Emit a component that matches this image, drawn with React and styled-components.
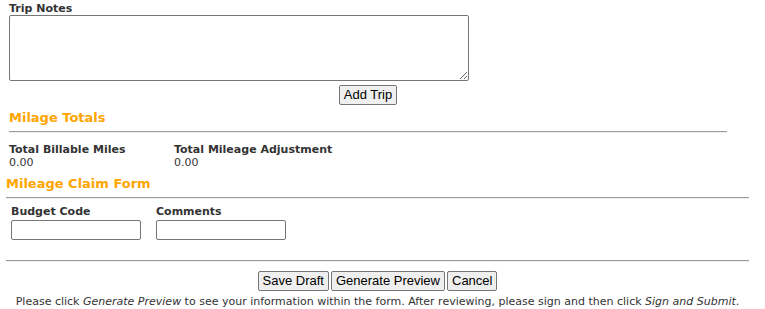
import React from "react";
import styled, { createGlobalStyle } from "styled-components";

const Global = createGlobalStyle`
  html, body { margin: 0; padding: 0; background: #fff; }
  body { font-family: "DejaVu Sans", Verdana, sans-serif; font-size: 11px; color: #333; }
`;

const Page = styled.div`
  display: flex;
  flex-direction: column;
  padding-top: 3px;
`;

const Section = styled.div`
  display: flex;
  flex-direction: column;
  margin-left: ${(p) => p.$left}px;
  width: ${(p) => p.$width}px;
`;

const Label = styled.label`
  display: block;
  font-weight: bold;
  font-size: 11px;
  line-height: 12px;
  color: #333;
`;

const TextArea = styled.textarea`
  box-sizing: border-box;
  width: 460px;
  height: 66px;
  border: 1px solid #767676;
  border-radius: 2px;
  resize: vertical;
  margin: 0;
  font-family: inherit;
`;

const Center = styled.div`
  display: flex;
  justify-content: center;
  margin-top: ${(p) => p.$top || 0}px;
`;

const Button = styled.button`
  font-family: "Liberation Sans", Arial, sans-serif;
  font-size: 13px;
  height: 20px;
  padding: 0 4px;
  margin: 0 1px;
  background: #efefef;
  color: #000;
  border: 1px solid #767676;
  border-radius: 2px;
  line-height: 16px;
`;

const Heading = styled.h3`
  margin: ${(p) => p.$top}px 0 0;
  font-size: 13px;
  line-height: 16px;
  font-weight: bold;
  color: #ffa500;
`;

const Rule = styled.hr`
  margin: ${(p) => p.$top}px 0 0;
  height: 0;
  border: 0;
  border-top: 1px solid #9a9a9a;
  border-bottom: 1px solid #eeeeee;
`;

const Totals = styled.div`
  display: grid;
  grid-template-columns: 165px auto;
  margin-top: 11px;
  width: max-content;
`;

const Stat = styled.div`
  display: flex;
  flex-direction: column;
`;

const Value = styled.span`
  line-height: 13px;
`;

const Fields = styled.div`
  display: flex;
  gap: 15px;
  margin: 7px 0 0 5px;
`;

const Field = styled.div`
  display: flex;
  flex-direction: column;
  gap: 2px;
`;

const Input = styled.input`
  box-sizing: border-box;
  width: 130px;
  height: 20px;
  border: 1px solid #767676;
  border-radius: 2px;
  margin: 0;
`;

const Note = styled.p`
  margin: 4px 0 0;
  text-align: center;
  font-size: 11px;
  line-height: 13px;
  color: #333;
  white-space: nowrap;
`;

export default function App() {
  return (
    <>
      <Global />
      <Page>
        <Section $left={9} $width={718}>
          <Label>Trip Notes</Label>
          <TextArea />
          <Center $top={4}>
            <Button>Add Trip</Button>
          </Center>
          <Heading $top={5}>Milage Totals</Heading>
          <Rule $top={5} />
          <Totals>
            <Stat>
              <Label>Total Billable Miles</Label>
              <Value>0.00</Value>
            </Stat>
            <Stat>
              <Label>Total Mileage Adjustment</Label>
              <Value>0.00</Value>
            </Stat>
          </Totals>
        </Section>
        <Section $left={6} $width={743}>
          <Heading $top={7}>Mileage Claim Form</Heading>
          <Rule $top={5} />
          <Fields>
            <Field>
              <Label>Budget Code</Label>
              <Input />
            </Field>
            <Field>
              <Label>Comments</Label>
              <Input />
            </Field>
          </Fields>
          <Rule $top={20} />
          <Center $top={9}>
            <Button>Save Draft</Button>
            <Button>Generate Preview</Button>
            <Button>Cancel</Button>
          </Center>
          <Note>
            Please click <i>Generate Preview</i> to see your information within the form. After reviewing, please sign and then click <i>Sign and Submit</i>.
          </Note>
        </Section>
      </Page>
    </>
  );
}
